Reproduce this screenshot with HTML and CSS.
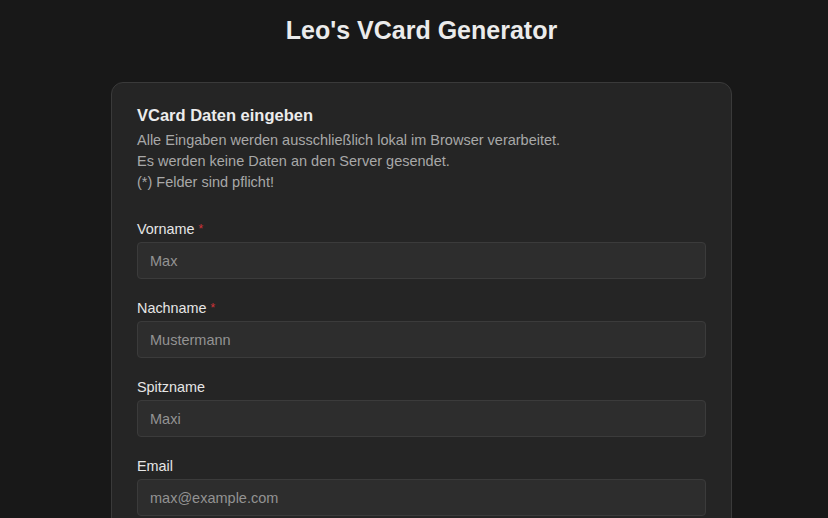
FILE: index.html
```html
<!DOCTYPE html>
<html lang="de">
<head>
<meta charset="utf-8">
<title>Leo's VCard Generator</title>
<link rel="stylesheet" href="styles.css">
</head>
<body>
<main class="page">
  <h1 class="title">Leo's VCard Generator</h1>
  <section class="card">
    <h2 class="card-title">VCard Daten eingeben</h2>
    <p class="card-desc">Alle Eingaben werden ausschließlich lokal im Browser verarbeitet.<br>Es werden keine Daten an den Server gesendet.<br>(*) Felder sind pflicht!</p>
    <form class="form">
      <div class="field">
        <label class="label" for="vorname">Vorname <span class="req">*</span></label>
        <input class="input" id="vorname" type="text" placeholder="Max">
      </div>
      <div class="field">
        <label class="label" for="nachname">Nachname <span class="req">*</span></label>
        <input class="input" id="nachname" type="text" placeholder="Mustermann">
      </div>
      <div class="field">
        <label class="label" for="spitzname">Spitzname</label>
        <input class="input" id="spitzname" type="text" placeholder="Maxi">
      </div>
      <div class="field">
        <label class="label" for="email">Email</label>
        <input class="input" id="email" type="email" placeholder="max@example.com">
      </div>
    </form>
  </section>
</main>
</body>
</html>
```

FILE: styles.css
```css
* { box-sizing: border-box; }
html, body {
  margin: 0;
  padding: 0;
  background: #181818;
  color: #e6e6e6;
  font-family: "Liberation Sans", Arial, Helvetica, sans-serif;
}
.page {
  display: flex;
  flex-direction: column;
  align-items: center;
  padding: 15px 0 0 15px;
}
.title {
  margin: 0;
  font-size: 25px;
  line-height: 30px;
  font-weight: bold;
  color: #ebebeb;
}
.card {
  margin-top: 37px;
  width: 621px;
  background: #252525;
  border: 1px solid #3a3a3a;
  border-radius: 12px;
  padding: 22px 25px 25px;
}
.card-title {
  margin: 0;
  font-size: 16.5px;
  line-height: 20px;
  font-weight: bold;
  color: #ececec;
}
.card-desc {
  margin: 5px 0 0;
  font-size: 14.5px;
  line-height: 21px;
  color: #a8a8a8;
}
.form {
  display: flex;
  flex-direction: column;
  gap: 20px;
  margin-top: 27px;
}
.field {
  display: flex;
  flex-direction: column;
  gap: 4px;
}
.label {
  font-size: 14.4px;
  line-height: 18px;
  color: #e6e6e6;
}
.req {
  color: #d0343a;
  font-size: 12px;
  vertical-align: top;
}
.input {
  height: 37px;
  width: 100%;
  background: #2d2d2d;
  border: 1px solid #3b3b3b;
  border-radius: 4px;
  padding: 0 12px;
  font-family: inherit;
  font-size: 14.5px;
  color: #e6e6e6;
  outline: none;
}
.input::placeholder {
  color: #939393;
}
```
